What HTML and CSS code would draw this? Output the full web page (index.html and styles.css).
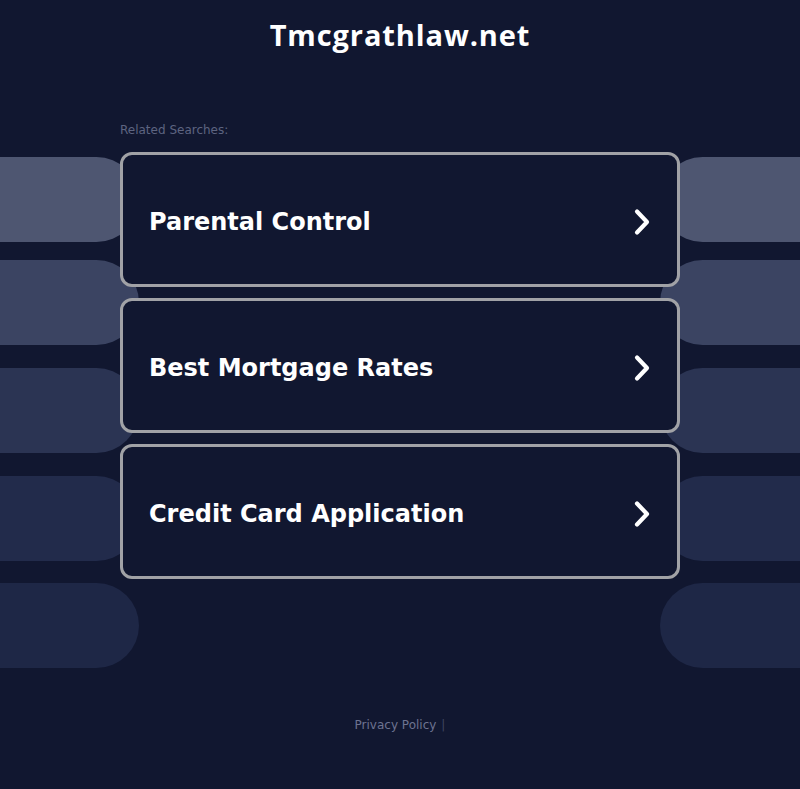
FILE: index.html
```html
<!DOCTYPE html>
<html>
<head>
<meta charset="utf-8">
<link rel="stylesheet" href="styles.css">
</head>
<body>
<div class="deco" aria-hidden="true">
  <div class="pill l p1"></div><div class="pill r p1"></div>
  <div class="pill l p2"></div><div class="pill r p2"></div>
  <div class="pill l p3"></div><div class="pill r p3"></div>
  <div class="pill l p4"></div><div class="pill r p4"></div>
  <div class="pill l p5"></div><div class="pill r p5"></div>
</div>
<header class="header"><h1 class="title">Tmcgrathlaw.net</h1></header>
<main class="main">
  <div class="related">Related Searches:</div>
  <ul class="list">
    <li class="card"><span class="label">Parental Control</span><svg class="chev" viewBox="0 0 20 30" width="20" height="30"><path d="M5 4.5 L15 15 L5 25.5" fill="none" stroke="#fff" stroke-width="4.2" stroke-linecap="round" stroke-linejoin="round"/></svg></li>
    <li class="card"><span class="label">Best Mortgage Rates</span><svg class="chev" viewBox="0 0 20 30" width="20" height="30"><path d="M5 4.5 L15 15 L5 25.5" fill="none" stroke="#fff" stroke-width="4.2" stroke-linecap="round" stroke-linejoin="round"/></svg></li>
    <li class="card"><span class="label">Credit Card Application</span><svg class="chev" viewBox="0 0 20 30" width="20" height="30"><path d="M5 4.5 L15 15 L5 25.5" fill="none" stroke="#fff" stroke-width="4.2" stroke-linecap="round" stroke-linejoin="round"/></svg></li>
  </ul>
</main>
<footer class="footer"><span class="privacy">Privacy Policy</span><span class="sep">|</span></footer>
</body>
</html>
```
FILE: styles.css
```css
html, body { margin: 0; padding: 0; }
body {
  background: #111730;
  min-height: 789px;
  position: relative;
  overflow: hidden;
  font-family: "DejaVu Sans", sans-serif;
}
.deco { position: absolute; inset: 0; z-index: 0; overflow: hidden; }
.pill { position: absolute; height: 85px; }
.pill.l { left: 0; width: 139px; border-radius: 0 43px 43px 0; }
.pill.r { right: 0; width: 140px; border-radius: 43px 0 0 43px; }
.p1 { top: 157px; background: #4e5671; }
.p2 { top: 260px; background: #3b4462; }
.p3 { top: 368px; background: #2b3453; }
.p4 { top: 476px; background: #222b4b; }
.p5 { top: 583px; background: #1e2746; }
.header { position: relative; z-index: 1; display: flex; justify-content: center; padding-top: 16px; }
.title {
  margin: 0;
  font-family: "Open Sans", sans-serif;
  font-weight: 700;
  font-size: 29px;
  line-height: 38px;
  color: #fff;
  letter-spacing: 0.9px;
}
.main { position: relative; z-index: 1; width: 560px; margin: 69px auto 0; }
.related { font-size: 12px; color: #5d6480; line-height: 14px; margin-bottom: 15px; }
.list { list-style: none; margin: 0; padding: 0; display: flex; flex-direction: column; gap: 11px; }
.card {
  box-sizing: border-box;
  height: 135px;
  border: 3px solid #a1a2a6;
  border-radius: 12px;
  background: #111730;
  display: flex;
  align-items: center;
  justify-content: space-between;
  padding: 4px 25px 0 26px;
}
.label { color: #fff; font-weight: 700; font-size: 24px; letter-spacing: 0; }
.chev { display: block; }
.footer { position: relative; z-index: 1; display: flex; justify-content: center; gap: 5px; margin-top: 139px; font-size: 12px; color: #6d7390; }
.sep { color: #3f4560; }
```
